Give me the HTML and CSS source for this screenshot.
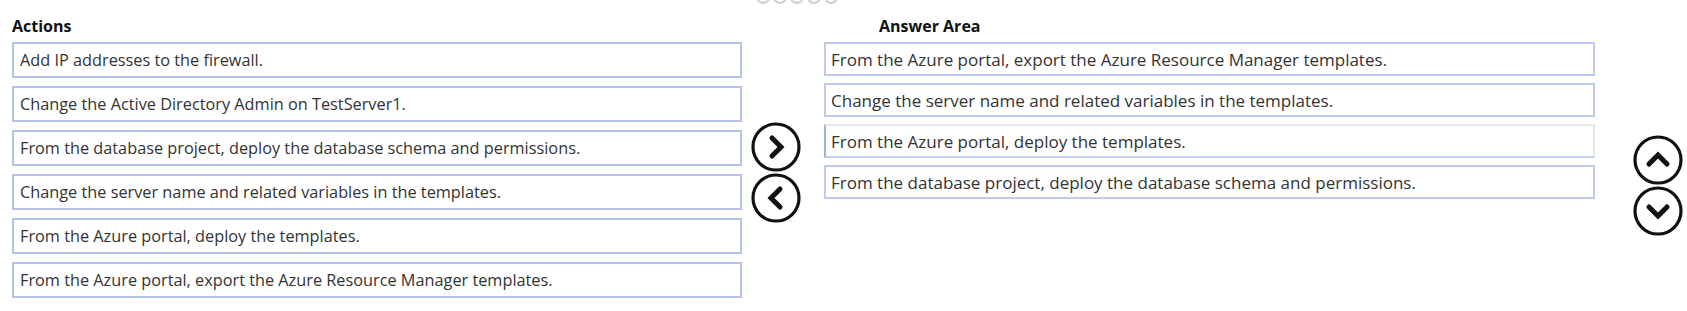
FILE: index.html
```html
<!DOCTYPE html>
<html lang="en">
<head>
  <meta charset="UTF-8" />
  <meta name="viewport" content="width=device-width, initial-scale=1" />
  <title>Actions / Answer Area</title>
  <link rel="stylesheet" href="styles.css">
</head>
<body>

  <div class="dots">
    <span></span><span></span><span></span><span></span><span></span>
  </div>

  <div class="board">
    <section class="pane actions">
      <h2>Actions</h2>
      <ul class="list">
        <li>Add IP addresses to the firewall.</li>
        <li>Change the Active Directory Admin on TestServer1.</li>
        <li>From the database project, deploy the database schema and permissions.</li>
        <li>Change the server name and related variables in the templates.</li>
        <li>From the Azure portal, deploy the templates.</li>
        <li>From the Azure portal, export the Azure Resource Manager templates.</li>
      </ul>
    </section>

    <div class="movers move-lr">
      <button class="round-btn" title="Move right">
        <svg viewBox="0 0 50 50" width="50" height="50"><circle cx="25" cy="25" r="23" /><polyline points="21,16 30,25 21,34" /></svg>
      </button>
      <button class="round-btn" title="Move left">
        <svg viewBox="0 0 50 50" width="50" height="50"><circle cx="25" cy="25" r="23" /><polyline points="29,16 20,25 29,34" /></svg>
      </button>
    </div>

    <section class="pane answer">
      <h2>Answer Area</h2>
      <ul class="list">
        <li>From the Azure portal, export the Azure Resource Manager templates.</li>
        <li>Change the server name and related variables in the templates.</li>
        <li class="selected">From the Azure portal, deploy the templates.</li>
        <li>From the database project, deploy the database schema and permissions.</li>
      </ul>
    </section>

    <div class="movers move-ud">
      <button class="round-btn" title="Move up">
        <svg viewBox="0 0 50 50" width="50" height="50"><circle cx="25" cy="25" r="23" /><polyline points="16,29 25,20 34,29" /></svg>
      </button>
      <button class="round-btn" title="Move down">
        <svg viewBox="0 0 50 50" width="50" height="50"><circle cx="25" cy="25" r="23" /><polyline points="16,21 25,30 34,21" /></svg>
      </button>
    </div>
  </div>

</body>
</html>
```

FILE: styles.css
```css
body {
  font-family: 'Open Sans', 'Noto Sans', sans-serif;
  background: #fff;
  color: #333;
  margin: 0;
  padding: 0;
  overflow: hidden;
}

.dots {
  display: flex;
  align-items: flex-end;
  gap: 3px;
  height: 4px;
  overflow: hidden;
  margin-left: 756px;
}

.dots span {
  width: 14px;
  height: 14px;
  border: 2px solid #cfcfcf;
  border-radius: 50%;
  box-sizing: border-box;
  flex: none;
}

.board {
  display: flex;
  align-items: flex-start;
  padding-left: 12px;
}

.pane h2 {
  font-size: 16px;
  font-weight: 700;
  line-height: 20px;
  color: #111;
  margin: 12px 0 6px;
}

.list {
  list-style: none;
  margin: 0;
  padding: 0;
}

.list li {
  box-sizing: border-box;
  border: 2px solid #b3c3ea;
  display: flex;
  align-items: center;
  white-space: nowrap;
}

.actions {
  width: 730px;
}

.actions .list li {
  height: 36px;
  margin-bottom: 8px;
  padding-left: 6px;
  font-size: 16.3px;
}

.answer {
  width: 771px;
}

.answer h2 {
  padding-left: 55px;
}

.answer .list li {
  height: 34px;
  margin-bottom: 7px;
  padding-left: 5px;
  font-size: 17px;
  border-color: #bccbee;
}

.answer .list li.selected {
  border-color: #e6e9ef;
  border-left-color: #9fb2e0;
  border-bottom-color: #c3cfee;
}

.movers {
  display: flex;
  flex-direction: column;
  gap: 1px;
}

.move-lr {
  width: 82px;
  padding-top: 118px;
  padding-left: 9px;
  box-sizing: border-box;
}

.move-ud {
  padding-top: 131px;
  padding-left: 38px;
}

.round-btn {
  background: none;
  border: none;
  padding: 0;
  width: 50px;
  height: 50px;
  cursor: pointer;
}

.round-btn svg {
  display: block;
  fill: none;
  stroke: #111;
}

.round-btn circle {
  stroke-width: 3.2;
}

.round-btn polyline {
  stroke-width: 5;
  stroke-linecap: round;
  stroke-linejoin: miter;
}
```
